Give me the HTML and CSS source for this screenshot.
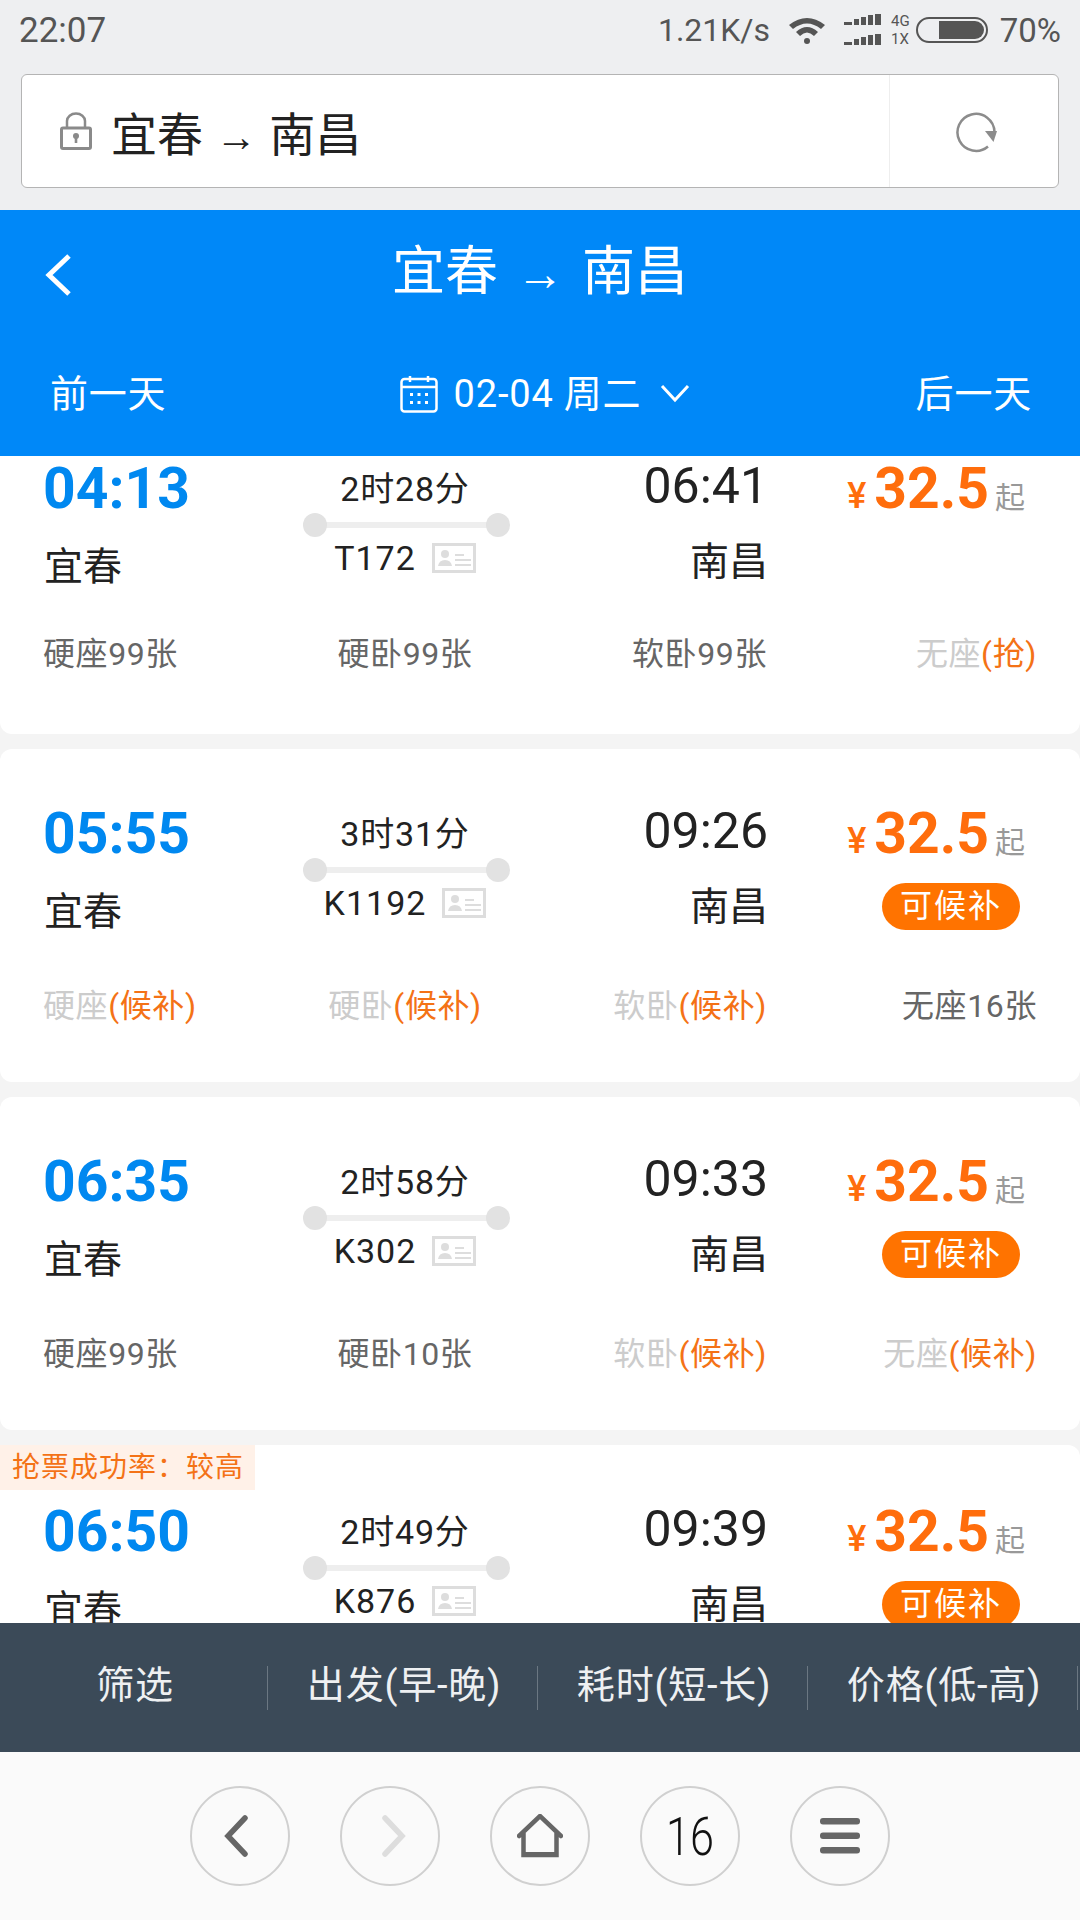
FILE: index.html
```html
<!DOCTYPE html>
<html lang="zh-CN">
<head>
    <meta charset="UTF-8">
    <meta name="viewport" content="width=device-width, initial-scale=1.0">
    <title>宜春 → 南昌</title>
    <link rel="stylesheet" href="styles.css">
</head>
<body>

    <!-- Status bar -->
    <div class="statusbar">
        <span class="clock">22:07</span>
        <div class="status-right">
            <span class="speed">1.21K/s</span>
            <svg class="wifi" width="38" height="28" viewBox="0 0 38 28">
                <path d="M1 9 Q19 -5 37 9 L33 13 Q19 2 5 13 Z" fill="#555"/>
                <path d="M8 16 Q19 6 30 16 L26 20 Q19 13 12 20 Z" fill="#555"/>
                <circle cx="19" cy="25" r="3" fill="#555"/>
            </svg>
            <svg class="signal" width="38" height="32" viewBox="0 0 38 32">
                <path d="M0 8h8v3h-8zM10 5h5v6h-5zM17 3h5v8h-5zM24 1h5v10h-5zM31 0h6v11h-6z" fill="#555"/>
                <path d="M0 28h8v3h-8zM10 25h5v6h-5zM17 23h5v8h-5zM24 21h5v10h-5zM31 20h6v11h-6z" fill="#555"/>
            </svg>
            <div class="net"><span>4G</span><span>1X</span></div>
            <svg class="battery" width="72" height="26" viewBox="0 0 72 26">
                <rect x="1" y="1" width="70" height="24" rx="12" fill="none" stroke="#555" stroke-width="2"/>
                <path d="M23 4h36a9 9 0 0 1 0 18h-36z" fill="#555"/>
            </svg>
            <span class="percent">70%</span>
        </div>
    </div>

    <!-- Address bar -->
    <div class="addressbar-wrap">
        <div class="addressbar">
            <div class="address">
                <svg class="lock" width="32" height="38" viewBox="0 0 32 38">
                    <path d="M7 16v-7a9 7.5 0 0 1 18 0v7" fill="none" stroke="#8a8a8a" stroke-width="2.5"/>
                    <rect x="1.5" y="16" width="29" height="20.5" rx="1.5" fill="none" stroke="#8a8a8a" stroke-width="3"/>
                    <circle cx="16" cy="24" r="3" fill="#8a8a8a"/>
                    <rect x="14.7" y="25" width="2.6" height="6" fill="#8a8a8a"/>
                </svg>
                <span class="address-text">宜春 <span class="arrow">→</span> 南昌</span>
            </div>
            <div class="reload">
                <svg width="42" height="42" viewBox="0 0 42 42">
                    <path d="M33 34.500A18.500 18.500 0 1 1 39.500 20" fill="none" stroke="#8c8c8c" stroke-width="2.500"/>
                    <path d="M30 19H42L38.500 30Z" fill="#8c8c8c"/>
                </svg>
            </div>
        </div>
    </div>

    <!-- Blue header -->
    <div class="header">
        <div class="title-row">
            <svg class="back" width="30" height="44" viewBox="0 0 30 44">
                <path d="M26 3L6 22L26 41" fill="none" stroke="#fff" stroke-width="5"/>
            </svg>
            <h1>宜春 <span class="arrow">→</span> 南昌</h1>
        </div>
        <div class="date-row">
            <span>前一天</span>
            <div class="date">
                <svg class="calendar" width="38" height="38" viewBox="0 0 38 38">
                    <rect x="1.500" y="4" width="35" height="32.500" rx="3" fill="none" stroke="#fff" stroke-width="2.500"/>
                    <path d="M1.500 12h35M10 1v6M28 1v6" fill="none" stroke="#fff" stroke-width="2.500"/>
                    <path d="M10 18h3v3h-3zM17.500 18h3v3h-3zM25 18h3v3h-3zM10 26h3v3h-3zM17.500 26h3v3h-3zM25 26h3v3h-3z" fill="#fff"/>
                </svg>
                <span>02-04 周二</span>
                <svg class="caret" width="30" height="20" viewBox="0 0 30 20">
                    <path d="M2 3L15 17L28 3" fill="none" stroke="#fff" stroke-width="3"/>
                </svg>
            </div>
            <span>后一天</span>
        </div>
    </div>

    <!-- Train list -->
    <div class="train-list">

        <div class="train first">
            <div class="train-top">
                <div class="depart">
                    <div class="time">04:13</div>
                    <div class="city">宜春</div>
                </div>
                <div class="route">
                    <div class="duration">2时28分</div>
                    <div class="line"></div>
                    <div class="number">T172
                        <svg class="id-card" width="44" height="30" viewBox="0 0 44 30"><use href="#id"/></svg>
                    </div>
                </div>
                <div class="arrive">
                    <div class="time">06:41</div>
                    <div class="city">南昌</div>
                </div>
                <div class="fare">
                    <div class="price"><span class="yen">¥</span><span class="amount">32.5</span><span class="from">起</span></div>
                </div>
            </div>
            <div class="seats">
                <span>硬座99张</span>
                <span>硬卧99张</span>
                <span>软卧99张</span>
                <span class="none">无座<em>(抢)</em></span>
            </div>
        </div>

        <div class="train">
            <div class="train-top">
                <div class="depart">
                    <div class="time">05:55</div>
                    <div class="city">宜春</div>
                </div>
                <div class="route">
                    <div class="duration">3时31分</div>
                    <div class="line"></div>
                    <div class="number">K1192
                        <svg class="id-card" width="44" height="30" viewBox="0 0 44 30"><use href="#id"/></svg>
                    </div>
                </div>
                <div class="arrive">
                    <div class="time">09:26</div>
                    <div class="city">南昌</div>
                </div>
                <div class="fare">
                    <div class="price"><span class="yen">¥</span><span class="amount">32.5</span><span class="from">起</span></div>
                    <div class="badge">可候补</div>
                </div>
            </div>
            <div class="seats">
                <span class="none">硬座<em>(候补)</em></span>
                <span class="none">硬卧<em>(候补)</em></span>
                <span class="none">软卧<em>(候补)</em></span>
                <span>无座16张</span>
            </div>
        </div>

        <div class="train">
            <div class="train-top">
                <div class="depart">
                    <div class="time">06:35</div>
                    <div class="city">宜春</div>
                </div>
                <div class="route">
                    <div class="duration">2时58分</div>
                    <div class="line"></div>
                    <div class="number">K302
                        <svg class="id-card" width="44" height="30" viewBox="0 0 44 30"><use href="#id"/></svg>
                    </div>
                </div>
                <div class="arrive">
                    <div class="time">09:33</div>
                    <div class="city">南昌</div>
                </div>
                <div class="fare">
                    <div class="price"><span class="yen">¥</span><span class="amount">32.5</span><span class="from">起</span></div>
                    <div class="badge">可候补</div>
                </div>
            </div>
            <div class="seats">
                <span>硬座99张</span>
                <span>硬卧10张</span>
                <span class="none">软卧<em>(候补)</em></span>
                <span class="none">无座<em>(候补)</em></span>
            </div>
        </div>

        <div class="train tagged">
            <div class="tag">抢票成功率：较高</div>
            <div class="train-top">
                <div class="depart">
                    <div class="time">06:50</div>
                    <div class="city">宜春</div>
                </div>
                <div class="route">
                    <div class="duration">2时49分</div>
                    <div class="line"></div>
                    <div class="number">K876
                        <svg class="id-card" width="44" height="30" viewBox="0 0 44 30"><use href="#id"/></svg>
                    </div>
                </div>
                <div class="arrive">
                    <div class="time">09:39</div>
                    <div class="city">南昌</div>
                </div>
                <div class="fare">
                    <div class="price"><span class="yen">¥</span><span class="amount">32.5</span><span class="from">起</span></div>
                    <div class="badge">可候补</div>
                </div>
            </div>
        </div>
    </div>

    <!-- Sort bar -->
    <div class="sortbar">
        <div>筛选</div>
        <div>出发(早-晚)</div>
        <div>耗时(短-长)</div>
        <div>价格(低-高)</div>
    </div>

    <!-- Browser toolbar -->
    <div class="toolbar">
        <div class="round">
            <svg class="prev" width="30" height="44" viewBox="0 0 30 44"><path d="M24 4L7 22L24 40" fill="none" stroke="#666" stroke-width="5.500" stroke-linecap="round"/></svg>
        </div>
        <div class="round">
            <svg class="next" width="30" height="44" viewBox="0 0 30 44"><path d="M6 4L23 22L6 40" fill="none" stroke="#ddd" stroke-width="5.500" stroke-linecap="round"/></svg>
        </div>
        <div class="round">
            <svg width="46" height="44" viewBox="0 0 46 44"><path d="M2 22L23 2L44 22M6.500 18V41H39.500V18" fill="none" stroke="#666" stroke-width="4.500" stroke-linecap="round"/><path d="M6 38h34v5h-34z" fill="#666"/></svg>
        </div>
        <div class="round"><span class="count">16</span></div>
        <div class="round">
            <svg width="40" height="36" viewBox="0 0 40 36">
                <rect y="0" width="40" height="6.500" rx="3" fill="#666"/>
                <rect y="14.500" width="40" height="6.500" rx="3" fill="#666"/>
                <rect y="29" width="40" height="6.500" rx="3" fill="#666"/>
            </svg>
        </div>
    </div>

    <!-- Shared id card icon -->
    <svg class="defs" width="0" height="0">
        <symbol id="id" viewBox="0 0 44 30">
            <rect x="1.500" y="1.500" width="41" height="27" fill="none" stroke="#ddd" stroke-width="3"/>
            <circle cx="13" cy="11" r="4" fill="#ddd"/>
            <path d="M6 23q1-6 7-6t7 6z" fill="#ddd"/>
            <path d="M23 12h9M23 17h16M23 22h16" stroke="#ddd" stroke-width="2"/>
        </symbol>
    </svg>

</body>
</html>
```

FILE: styles.css
```css
/* General Styles */
* {
    margin: 0;
    padding: 0;
    box-sizing: border-box;
    font-family: Roboto, "Noto Sans CJK SC", sans-serif;
}

body {
    display: flex;
    flex-direction: column;
    width: 1080px;
    height: 1920px;
    overflow: hidden;
    background-color: #f4f4f4;
}

/* Status bar */
.statusbar {
    display: flex;
    justify-content: space-between;
    align-items: center;
    height: 60px;
    padding: 0 19px;
    background-color: #eeeff1;
    color: #555;
    font-size: 32px;
}

.clock {
    font-size: 35px;
}

.status-right {
    display: flex;
    align-items: center;
}

.wifi {
    margin-left: 18px;
}

.signal {
    margin-left: 18px;
}

.net {
    display: flex;
    flex-direction: column;
    margin-left: 9px;
    font-size: 15px;
    line-height: 18px;
}

.battery {
    margin-left: 6px;
}

.percent {
    margin-left: 12px;
    font-size: 33px;
}

/* Address bar */
.addressbar-wrap {
    height: 150px;
    padding: 14px 21px 22px;
    background-color: #eeeff1;
}

.addressbar {
    display: flex;
    height: 114px;
    background-color: #fff;
    border: 1px solid #b4b4b4;
    border-radius: 6px;
}

.address {
    flex: 1;
    display: flex;
    align-items: center;
    padding-left: 38px;
}

.address-text {
    margin-left: 19px;
    font-size: 46px;
    color: #222;
}

.arrow {
    margin: 0 1px;
    font-family: "Liberation Sans", sans-serif;
    font-size: 0.9em;
}

.reload {
    display: flex;
    align-items: center;
    justify-content: center;
    width: 169px;
    padding: 4px 0 0 4px;
    border-left: 1px solid #eee;
}

/* Blue header */
.header {
    height: 246px;
    background-color: #0088f8;
    color: #fff;
}

.title-row {
    position: relative;
    display: flex;
    justify-content: center;
    align-items: center;
    height: 114px;
}

.title-row h1 {
    font-size: 53px;
    font-weight: 400;
}

.title-row .arrow {
    margin: 0 5px;
}

.back {
    position: absolute;
    left: 43px;
    top: 43px;
}

.date-row {
    display: flex;
    justify-content: space-between;
    align-items: center;
    height: 70px;
    margin-top: 31px;
    padding: 0 48px 0 50px;
    font-size: 38px;
    letter-spacing: 0.8px;
}

.date {
    display: flex;
    align-items: center;
    gap: 16px;
    margin-left: 8px;
}

.calendar {
    margin-top: 7px;
}

.caret {
    margin-top: 6px;
    margin-left: 3px;
}

/* Train list */
.train-list {
    flex: 1;
    min-height: 0;
    overflow: hidden;
}

.train {
    position: relative;
    height: 333px;
    margin-bottom: 15px;
    padding: 53px 43px 0;
    background-color: #fff;
    border-radius: 12px;
}

.train.first {
    height: 330px;
    margin-top: -52px;
}

.train.tagged {
    padding-top: 55px;
}

.train-top {
    display: grid;
    grid-template-columns: 257px 210px 257px 270px;
    height: 168px;
}

.time {
    height: 64px;
    line-height: 64px;
    font-size: 57px;
}

.depart .time {
    color: #0088f0;
    font-weight: 700;
}

.arrive {
    margin-right: -1px;
    text-align: right;
}

.arrive .time {
    height: 58px;
    line-height: 58px;
    font-size: 50px;
    color: #222;
}

.city {
    font-size: 39px;
    line-height: 52px;
    color: #222;
}

.depart .city {
    margin-top: 20px;
    margin-left: 1px;
}

.arrive .city {
    margin-top: 21px;
}

/* Duration and train number */
.route {
    display: flex;
    flex-direction: column;
    align-items: center;
    color: #222;
}

.duration {
    height: 44px;
    margin-top: 10px;
    line-height: 44px;
    font-size: 34px;
    letter-spacing: 0.8px;
}

.line {
    position: relative;
    width: 183px;
    height: 6px;
    margin: 11px 0 0 2px;
    background-color: #eee;
}

.line::before,
.line::after {
    content: "";
    position: absolute;
    top: -9px;
    width: 24px;
    height: 24px;
    border-radius: 50%;
    background-color: #e2e2e2;
}

.line::before {
    left: -12px;
}

.line::after {
    right: -12px;
}

.number {
    display: flex;
    align-items: center;
    gap: 16px;
    height: 44px;
    margin-top: 8px;
    font-size: 34px;
    letter-spacing: 1px;
}

.defs {
    position: absolute;
}

/* Price */
.fare {
    display: flex;
    flex-direction: column;
    align-items: flex-end;
}

.price {
    display: flex;
    align-items: baseline;
    height: 64px;
    line-height: 64px;
    margin-right: 12px;
}

.yen {
    font-size: 36px;
    font-weight: 500;
    color: #ff6d0c;
    margin-right: 8px;
}

.amount {
    font-size: 57px;
    font-weight: 700;
    color: #ff6d0c;
}

.from {
    margin-left: 6px;
    font-size: 30px;
    color: #999;
}

.badge {
    width: 138px;
    height: 47px;
    margin-top: 17px;
    margin-right: 17px;
    line-height: 47px;
    text-align: center;
    font-size: 32px;
    letter-spacing: 2px;
    color: #fff;
    background-color: #ff7300;
    border-radius: 24px;
}

/* Seats row */
.seats {
    display: grid;
    grid-template-columns: 257px 210px 257px 270px;
    margin-top: 14px;
    font-size: 32px;
    line-height: 44px;
    letter-spacing: 0.6px;
    color: #666;
}

.first .seats {
    margin-top: 7px;
}

.seats span:nth-child(2) {
    text-align: center;
}

.seats span:nth-child(3),
.seats span:nth-child(4) {
    text-align: right;
}

.seats .none {
    color: #ccc;
}

.seats em {
    font-style: normal;
    color: #f47216;
}

/* Success rate tag */
.tag {
    position: absolute;
    left: 0;
    top: 0;
    width: 255px;
    height: 45px;
    padding-left: 12px;
    line-height: 45px;
    font-size: 28px;
    letter-spacing: 1px;
    color: #f47216;
    background-color: #fff1e8;
}

/* Sort bar */
.sortbar {
    display: grid;
    grid-template-columns: 268px repeat(3, 270px);
    align-items: center;
    height: 129px;
    background-color: #3b4a58;
    color: #eef0f2;
    font-size: 38px;
    letter-spacing: 0.8px;
}

.sortbar div {
    height: 44px;
    padding-left: 3px;
    line-height: 38px;
    text-align: center;
    border-right: 1px solid #6b7782;
}

/* Browser toolbar */
.toolbar {
    display: flex;
    justify-content: center;
    align-items: center;
    gap: 50px;
    height: 168px;
    background-color: #fafafa;
}

.round {
    display: flex;
    justify-content: center;
    align-items: center;
    width: 100px;
    height: 100px;
    border: 2px solid #d0d0d0;
    border-radius: 50%;
}

.prev {
    margin-right: 8px;
}

.next {
    margin-left: 7px;
}

.count {
    font-size: 54px;
    font-weight: 300;
    color: #111;
    transform: scaleX(0.8);
}
```
